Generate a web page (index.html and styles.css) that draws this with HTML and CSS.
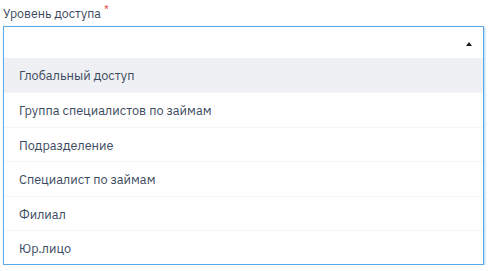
FILE: index.html
```html
<!doctype html>
<html>
	<head>
		<meta charset="utf-8">
		<title>Уровень доступа</title>
		<link rel="stylesheet" href="styles.css">
	</head>
<body>

	<!--field start-->
	<div class="field">
		<label class="f_label">Уровень доступа<span class="req">*</span></label>
		<div class="f_select">
			<div class="s_value"><span class="caret"></span></div>
			<ul class="s_list">
				<li class="active">Глобальный доступ</li>
				<li>Группа специалистов по займам</li>
				<li>Подразделение</li>
				<li>Специалист по займам</li>
				<li>Филиал</li>
				<li>Юр.лицо</li>
			</ul>
		</div>
	</div>
	<!--end field-->

</body>
</html>
```

FILE: styles.css
```css
*{margin:0;padding:0;box-sizing:border-box;}
body{font-family:"IBM Plex Sans",Roboto,"Noto Sans",sans-serif;font-size:12px;color:#3b4a5e;background:#fff;}

/*field start*/
.field{width:481px;margin:0 0 0 3px;padding-top:5px;}
.field .f_label{display:block;height:21px;line-height:16px;font-size:12.4px;color:#3b4a5e;}
.field .f_label .req{color:#e5413a;font-size:11px;position:relative;top:-5px;left:3px;}
.field .f_select{border:1px solid #5aa7e9;box-shadow:1px 1px 2px rgba(90,167,233,.5);}
.field .s_value{height:31px;display:flex;align-items:center;justify-content:flex-end;padding-right:11px;}
.field .caret{width:0;height:0;border-left:3px solid transparent;border-right:3px solid transparent;border-bottom:4px solid #1c1c1c;margin-top:2px;}
.field .s_list{list-style:none;}
.field .s_list li{height:34.4px;line-height:34px;padding-left:15px;border-top:1px solid #f4f5f7;font-size:12.7px;color:#3b4a60;}
.field .s_list li:first-child{border-top:none;}
.field .s_list li.active{background:#eff0f4;}
/*end field*/
```
